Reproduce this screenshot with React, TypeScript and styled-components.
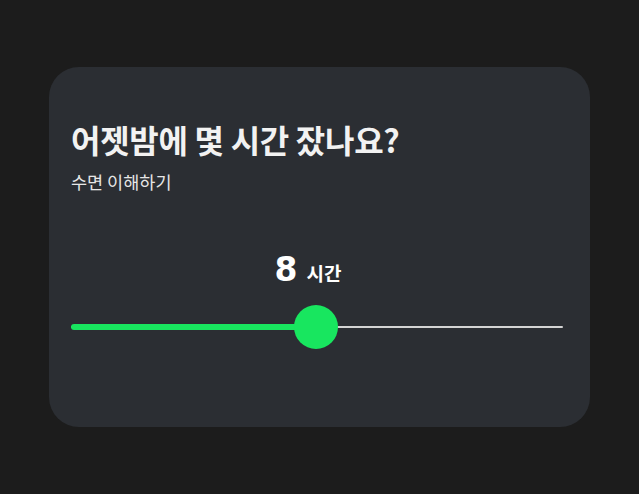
import React, { useState } from "react"
import styled, { createGlobalStyle } from "styled-components"

const GlobalStyle = createGlobalStyle`
  html, body {
    margin: 0;
    padding: 0;
    background: #1c1c1c;
  }
  body {
    font-family: "Noto Sans CJK KR", "Noto Sans", sans-serif;
  }
`

const Page = styled.div`
  width: 639px;
  height: 494px;
  box-sizing: border-box;
  padding: 67px 50px 0 49px;
`

const Card = styled.div`
  box-sizing: border-box;
  width: 541px;
  height: 360px;
  background: #2b2e33;
  border-radius: 30px;
  padding: 50px 27px 0 22px;
  display: flex;
  flex-direction: column;
`

const Title = styled.h1`
  margin: 0;
  color: #f2f2f2;
  font-size: 32px;
  font-weight: 700;
  line-height: 44px;
  letter-spacing: -0.3px;
`

const Subtitle = styled.p`
  margin: 9px 0 0;
  color: #e6e6e6;
  font-size: 17.5px;
  font-weight: 400;
  line-height: 24px;
`

const ValueRow = styled.div`
  margin-top: 56px;
  height: 40px;
  padding-right: 18px;
  display: flex;
  justify-content: center;
  align-items: baseline;
  gap: 9px;
  color: #ffffff;
  font-weight: 700;
  line-height: 40px;
`

const Number = styled.span`
  font-family: "DejaVu Sans", "Roboto", sans-serif;
  font-size: 33px;
`

const Unit = styled.span`
  font-size: 19px;
`

const Slider = styled.div`
  position: relative;
  margin-top: 15px;
  height: 44px;
`

const Track = styled.div`
  position: absolute;
  left: 0;
  right: 0;
  top: 21px;
  height: 2px;
  background: #d4d4d4;
  border-radius: 1px;
`

const Fill = styled.div`
  position: absolute;
  left: 0;
  top: 19px;
  height: 6px;
  background: #18e65f;
  border-radius: 3px;
`

const Thumb = styled.div`
  position: absolute;
  top: 0;
  width: 44px;
  height: 44px;
  margin-left: -22px;
  border-radius: 50%;
  background: #18e65f;
`

export default function App() {
  const [hours] = useState(8)
  const min = 0
  const max = 16
  const pct = ((hours - min) / (max - min)) * 100
  return (
    <>
      <GlobalStyle />
      <Page>
        <Card>
          <Title>어젯밤에 몇 시간 잤나요?</Title>
          <Subtitle>수면 이해하기</Subtitle>
          <ValueRow>
            <Number>{hours}</Number>
            <Unit>시간</Unit>
          </ValueRow>
          <Slider>
            <Track />
            <Fill style={{ width: `calc(${pct}% - 1px)` }} />
            <Thumb style={{ left: `calc(${pct}% - 1px)` }} />
          </Slider>
        </Card>
      </Page>
    </>
  )
}
